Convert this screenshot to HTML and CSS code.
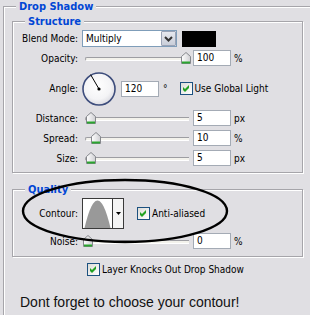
FILE: index.html
```html
<!DOCTYPE html>
<html>
<head>
<meta charset="utf-8">
<link rel="stylesheet" href="styles.css">
</head>
<body>
<div class="panel">
  <fieldset class="box outer">
    <legend>Drop Shadow</legend>
    <fieldset class="box group structure">
      <legend>Structure</legend>
      <div class="row r-blend">
        <span class="lbl">Blend Mode:</span>
        <div class="select">
          <span class="sel-text">Multiply</span>
          <span class="sel-btn"><svg width="9" height="6" viewBox="0 0 9 6"><path d="M1 1 L4.5 4.5 L8 1" fill="none" stroke="#333" stroke-width="2"/></svg></span>
        </div>
        <span class="swatch"></span>
      </div>
      <div class="row r-opacity">
        <span class="lbl">Opacity:</span>
        <div class="slider"><span class="track"></span><span class="thumb" style="left:99px"><svg width="10" height="12" viewBox="0 0 10 12"><defs><linearGradient id="tg1" x1="0" y1="0" x2="1" y2="0"><stop offset="0" stop-color="#fff"/><stop offset="1" stop-color="#cfcfd3"/></linearGradient></defs><path d="M0.5 4.5 L5 0.5 L9.5 4.5 V11.5 H0.5 Z" fill="url(#tg1)" stroke="#85878c"/><rect x="1" y="9.5" width="8" height="2" fill="#2aa52f"/></svg></span></div>
        <span class="num">100</span><span class="unit">%</span>
      </div>
      <div class="row r-angle">
        <span class="lbl">Angle:</span>
        <span class="dial"><svg width="34" height="34" viewBox="0 0 34 34"><defs><radialGradient id="dg" cx="0.45" cy="0.4" r="0.6"><stop offset="0" stop-color="#ffffff"/><stop offset="0.7" stop-color="#f4f4f6"/><stop offset="1" stop-color="#dcdce2"/></radialGradient></defs><circle cx="17" cy="17" r="16" fill="url(#dg)" stroke="#3d4d7c" stroke-width="1.6"/><line x1="17" y1="17" x2="8.6" y2="2.6" stroke="#000" stroke-width="1"/><circle cx="17" cy="17" r="1.6" fill="#000"/></svg></span>
        <span class="num">120</span><span class="deg">°</span>
        <span class="cb"><svg width="13" height="13" viewBox="0 0 13 13"><polygon points="3,5 5,7 9,3 9,6 5,10 3,8" fill="#21a121"/></svg></span><span class="cbl">Use Global Light</span>
      </div>
      <div class="row r-dist">
        <span class="lbl">Distance:</span>
        <div class="slider"><span class="track"></span><span class="thumb" style="left:4px"><svg width="10" height="12" viewBox="0 0 10 12"><path d="M0.5 4.5 L5 0.5 L9.5 4.5 V11.5 H0.5 Z" fill="url(#tg1)" stroke="#85878c"/><rect x="1" y="9.5" width="8" height="2" fill="#2aa52f"/></svg></span></div>
        <span class="num">5</span><span class="unit">px</span>
      </div>
      <div class="row r-spread">
        <span class="lbl">Spread:</span>
        <div class="slider"><span class="track"></span><span class="thumb" style="left:9px"><svg width="10" height="12" viewBox="0 0 10 12"><path d="M0.5 4.5 L5 0.5 L9.5 4.5 V11.5 H0.5 Z" fill="url(#tg1)" stroke="#85878c"/><rect x="1" y="9.5" width="8" height="2" fill="#2aa52f"/></svg></span></div>
        <span class="num">10</span><span class="unit">%</span>
      </div>
      <div class="row r-size">
        <span class="lbl">Size:</span>
        <div class="slider"><span class="track"></span><span class="thumb" style="left:4px"><svg width="10" height="12" viewBox="0 0 10 12"><path d="M0.5 4.5 L5 0.5 L9.5 4.5 V11.5 H0.5 Z" fill="url(#tg1)" stroke="#85878c"/><rect x="1" y="9.5" width="8" height="2" fill="#2aa52f"/></svg></span></div>
        <span class="num">5</span><span class="unit">px</span>
      </div>
    </fieldset>
    <fieldset class="box group quality">
      <legend>Quality</legend>
      <div class="row r-contour">
        <span class="lbl">Contour:</span>
        <div class="contour">
          <span class="graph"><svg width="29" height="29" viewBox="0 0 29 29"><path d="M1.5 29 C5 14 9.5 1.5 14.5 1.5 C19.5 1.5 24 14 27.5 29 Z" fill="#999999"/></svg></span>
          <span class="cdrop"><svg width="5" height="3" viewBox="0 0 5 3"><path d="M0 0 H5 L2.5 3 Z" fill="#000"/></svg></span>
        </div>
        <span class="cb"><svg width="13" height="13" viewBox="0 0 13 13"><polygon points="3,5 5,7 9,3 9,6 5,10 3,8" fill="#21a121"/></svg></span><span class="cbl">Anti-aliased</span>
      </div>
      <div class="row r-noise">
        <span class="lbl">Noise:</span>
        <div class="slider"><span class="track"></span><span class="thumb" style="left:1px"><svg width="10" height="12" viewBox="0 0 10 12"><path d="M0.5 4.5 L5 0.5 L9.5 4.5 V11.5 H0.5 Z" fill="url(#tg1)" stroke="#85878c"/><rect x="1" y="9.5" width="8" height="2" fill="#2aa52f"/></svg></span></div>
        <span class="num">0</span><span class="unit">%</span>
      </div>
    </fieldset>
    <div class="row knock">
      <span class="cb"><svg width="13" height="13" viewBox="0 0 13 13"><polygon points="3,5 5,7 9,3 9,6 5,10 3,8" fill="#21a121"/></svg></span><span class="cbl">Layer Knocks Out Drop Shadow</span>
    </div>
    <p class="note">Dont forget to choose your contour!</p>
  </fieldset>
  <svg class="ring" width="310" height="315" viewBox="0 0 310 315"><ellipse cx="125" cy="211" rx="102" ry="31" fill="none" stroke="#000" stroke-width="2.4"/></svg>
</div>
</body>
</html>
```
FILE: styles.css
```css
* { box-sizing: border-box; }
html, body { margin: 0; padding: 0; }
body {
  width: 310px;
  height: 315px;
  overflow: hidden;
  background: #e0dfe3;
  font-family: "DejaVu Sans Condensed", "DejaVu Sans", sans-serif;
  font-stretch: condensed;
  font-size: 10px;
  color: #000;
}
.panel { position: relative; width: 310px; height: 315px; overflow: hidden; }

.box {
  margin: 0;
  padding: 0;
  min-width: 0;
  border: 1px solid #a6a5aa;
  box-shadow: inset 1px 1px 0 #fff, 1px 1px 0 #fff;
}
.box > legend {
  font-weight: bold;
  color: #0046d5;
  line-height: 13px;
  padding: 0 3px;
  background: #e0dfe3;
}
.outer {
  margin-left: 3px;
  width: 307px;
  height: 315px;
  border-right: none;
  border-bottom: none;
  box-shadow: inset 1px 1px 0 #fff;
}
.outer > legend { margin-left: 12px; font-size: 11px; }
.group { margin-left: 8px; width: 291px; }
.group > legend { margin-left: 12px; font-size: 11px; }
.structure { margin-top: 2px; padding: 2px 0 6px; }
.quality { margin-top: 10px; padding: 2px 0 7px; }

.row { display: flex; align-items: center; }
.lbl { width: 65px; margin-right: 4px; text-align: right; flex: none; }
.r-blend { height: 17px; }
.r-opacity { height: 16px; margin-top: 3px; }
.r-angle { height: 35px; margin-top: 5px; }
.r-dist, .r-spread, .r-size { height: 16px; margin-top: 4px; }
.r-contour { height: 31px; }
.r-noise { height: 16px; margin-top: 4px; }

.select {
  position: relative;
  display: flex;
  align-items: center;
  width: 95px;
  height: 17px;
  background: #fff;
  border: 1px solid #7f9db9;
}
.sel-text { flex: 1; padding-left: 3px; }
.sel-btn {
  display: flex;
  align-items: center;
  justify-content: center;
  width: 15px;
  height: 15px;
  background: linear-gradient(#e6e8ee, #c9ced9);
  border: 1px solid #9aa3b6;
  border-radius: 1px;
}
.swatch { width: 34px; height: 16px; margin-left: 5px; background: #000; }

.slider { position: relative; width: 108px; height: 16px; margin-right: 3px; flex: none; }
.track {
  position: absolute;
  left: 3px;
  right: 1px;
  top: 7px;
  height: 4px;
  background: #f3f2ec;
  border-top: 1px solid #9d9da2;
  border-left: 1px solid #9d9da2;
  border-bottom: 1px solid #ffffff;
  border-radius: 2px 0 0 2px;
}
.thumb { position: absolute; top: 2px; width: 10px; height: 12px; }
.thumb svg { display: block; }

.num {
  width: 38px;
  height: 16px;
  line-height: 14px;
  padding-left: 3px;
  background: #fff;
  border: 1px solid #a4abb5;
  flex: none;
}
.unit { margin-left: 3px; }
.dial { width: 34px; height: 34px; margin-right: 5px; flex: none; }
.dial svg { display: block; }
.deg { margin-left: 4px; margin-right: 12px; }
.cb {
  display: block;
  width: 13px;
  height: 13px;
  border: 1px solid #1c5180;
  background: linear-gradient(135deg, #dcdcd7, #ffffff);
  flex: none;
  position: relative;
}
.cb svg { position: absolute; left: -1px; top: -1px; }
.cbl { margin-left: 2px; }

.contour {
  display: flex;
  width: 42px;
  height: 31px;
  border: 1px solid #3a3a3a;
  background: #fff;
  margin-right: 13px;
  flex: none;
}
.graph { width: 30px; height: 29px; border-right: 1px solid #3a3a3a; }
.graph svg { display: block; }
.cdrop { flex: 1; display: flex; align-items: center; justify-content: center; background: #f4f4f4; }
.cdrop svg { display: block; }

.knock { height: 13px; margin-top: 6px; margin-left: 83px; }
.note {
  margin: 18px 0 0 16px;
  font-family: "Liberation Sans", Arial, sans-serif;
  font-size: 14px;
  line-height: 16px;
  color: #111;
}
.ring { position: absolute; left: 0; top: 0; pointer-events: none; }
```
